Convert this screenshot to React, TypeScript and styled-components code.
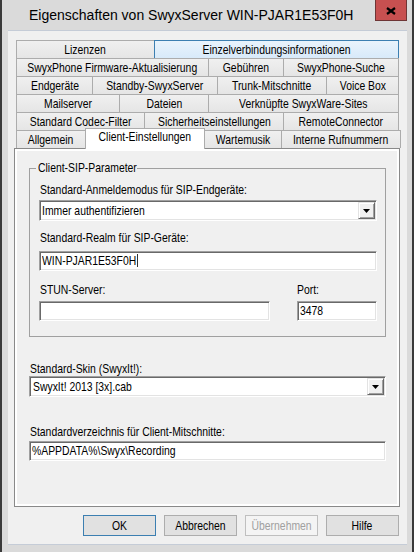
import React from "react";
import styled, { createGlobalStyle, css } from "styled-components";

const UI_FONT = `"Liberation Sans", Arial, sans-serif`;

const GlobalStyle = createGlobalStyle`
  *, *::before, *::after { box-sizing: border-box; }
  html, body { margin: 0; padding: 0; }
  body {
    background: #dadada;
    font-family: ${UI_FONT};
    font-size: 13px;
    color: #000;
  }
`;

const Txt = styled.span<{ $origin?: "left" | "center" }>`
  display: inline-block;
  white-space: nowrap;
  transform: scaleX(0.8);
  transform-origin: ${(p) => (p.$origin === "center" ? "center" : "left")} center;
`;

/* ---------- window frame ---------- */

const Window = styled.div`
  width: 414px;
  height: 552px;
  display: flex;
  flex-direction: column;
  background: #dadada;
  border-left: 2px solid #3a3a3a;
  border-right: 2px solid #3a3a3a;
  overflow: hidden;
`;

const TitleBar = styled.div`
  height: 30px;
  flex: none;
  display: flex;
  align-items: flex-start;
`;

const Title = styled.div`
  flex: 1;
  padding-left: 27px;
  font-size: 14px;
  line-height: 30px;
  white-space: nowrap;
`;

const CloseButton = styled.div`
  width: 32px;
  height: 21px;
  margin-right: 5px;
  background: #c75050;
  border: 1px solid #6e3535;
  border-top: none;
  display: flex;
  align-items: center;
  justify-content: center;
  padding-top: 2px;
`;

const Client = styled.div`
  flex: 1;
  margin: 0 5px 7px 6px;
  background: #f0f0f0;
  border-top: 1px solid #c5ccd7;
  border-bottom: 1px solid #c5ccd7;
  padding: 9px 0 0 6px;
  display: flex;
  flex-direction: column;
`;

/* ---------- tab control ---------- */

const TabStrip = styled.div`
  padding-left: 2px;
  display: flex;
  flex-direction: column;
`;

const TabRow = styled.div`
  display: flex;
  align-items: flex-end;
  height: 18px;
`;

type TabState = "hover" | "selected";

const Tab = styled.div<{ $w: number; $state?: TabState }>`
  flex: none;
  width: ${(p) => p.$w}px;
  height: 18px;
  border: 1px solid #acacac;
  border-bottom: none;
  background: linear-gradient(#f0f0f0, #e5e5e5);
  display: flex;
  justify-content: center;
  line-height: 17px;
  overflow: hidden;

  & + & {
    margin-left: -1px;
  }

  ${(p) =>
    p.$state === "hover" &&
    css`
      position: relative;
      z-index: 1;
      border-color: #3c7fb1;
      background: linear-gradient(#e9f3fc, #d8eaf9);
    `}

  ${(p) =>
    p.$state === "selected" &&
    css`
      position: relative;
      z-index: 2;
      height: 21px;
      margin-bottom: -1px;
      background: #fff;
      line-height: 16px;
      && {
        margin-left: -3px;
      }
    `}
`;

const Panel = styled.div`
  width: 386px;
  height: 359px;
  border: 1px solid #898989;
  background: #fff;
  padding: 2px;
  display: flex;
`;

const Page = styled.div`
  flex: 1;
  background: #f0f0f0;
  padding: 10px 11px 0 12px;
`;

/* ---------- form parts ---------- */

const Group = styled.fieldset`
  margin: 0;
  padding: 0 8px 15px 9px;
  border: 1px solid #a0a0a0;
  min-width: 0;
`;

const Legend = styled.legend`
  margin-left: -3px;
  padding: 0 2px;
  line-height: 14px;
  width: 101px;
  white-space: nowrap;
`;

const Caption = styled.div<{ $mt: number; $ml?: number }>`
  height: 14px;
  line-height: 14px;
  margin-top: ${(p) => p.$mt}px;
  padding-left: ${(p) => p.$ml ?? 0}px;
  white-space: nowrap;
`;

const sunken = css`
  border-style: solid;
  border-width: 1px;
  border-color: #a0a0a0 #ffffff #ffffff #a0a0a0;
  box-shadow: inset 1px 1px 0 #696969, inset -1px -1px 0 #e3e3e3;
  background: #fff;
`;

const Edit = styled.div<{ $mt?: number }>`
  ${sunken}
  height: 20px;
  margin-top: ${(p) => p.$mt ?? 0}px;
  padding-left: 2px;
  line-height: 18px;
  white-space: nowrap;
  overflow: hidden;
`;

const Caret = styled.span`
  display: inline-block;
  width: 1px;
  height: 13px;
  margin-left: 1px;
  background: #000;
  vertical-align: -2px;
`;

const Combo = styled.div<{ $mt?: number; $pad?: number }>`
  ${sunken}
  height: 21px;
  margin-top: ${(p) => p.$mt ?? 0}px;
  padding: 1px;
  display: flex;
  align-items: stretch;
`;

const ComboText = styled.div<{ $pad?: number }>`
  flex: 1;
  padding-left: ${(p) => p.$pad ?? 1}px;
  line-height: 17px;
  white-space: nowrap;
  overflow: hidden;
`;

const DropButton = styled.div`
  width: 17px;
  background: #f0f0f0;
  border-style: solid;
  border-width: 1px;
  border-color: #e3e3e3 #696969 #696969 #e3e3e3;
  box-shadow: inset 1px 1px 0 #fff, inset -1px -1px 0 #a0a0a0;
  display: flex;
  align-items: center;
  justify-content: center;
`;

const PairGrid = styled.div`
  display: grid;
  grid-template-columns: 1fr 80px;
  column-gap: 27px;
  row-gap: 4px;
  margin-top: 12px;
`;

const PairCaption = styled.div<{ $ml?: number }>`
  height: 14px;
  line-height: 14px;
  padding-left: ${(p) => p.$ml ?? 0}px;
  white-space: nowrap;
`;

/* ---------- dialog buttons ---------- */

const ButtonRow = styled.div`
  display: flex;
  justify-content: flex-end;
  gap: 8px;
  margin-top: 8px;
  padding-right: 8px;
`;

type ButtonKind = "default" | "normal" | "disabled";

const DialogButton = styled.div<{ $kind: ButtonKind }>`
  width: 73px;
  height: 21px;
  border: 1px solid #adadad;
  background: #e1e1e1;
  display: flex;
  justify-content: center;
  line-height: 19px;

  ${(p) =>
    p.$kind === "default" &&
    css`
      border-color: #3c7fb1;
    `}

  ${(p) =>
    p.$kind === "disabled" &&
    css`
      border-color: #bfbfbf;
      background: #f4f4f4;
      color: #a0a0a0;
    `}
`;

/* ---------- data ---------- */

type TabDef = { label: string; w: number; state?: TabState };

const TAB_ROWS: TabDef[][] = [
  [
    { label: "Lizenzen", w: 139 },
    { label: "Einzelverbindungsinformationen", w: 245, state: "hover" },
  ],
  [
    { label: "SwyxPhone Firmware-Aktualisierung", w: 193 },
    { label: "Gebühren", w: 76 },
    { label: "SwyxPhone-Suche", w: 116 },
  ],
  [
    { label: "Endgeräte", w: 77 },
    { label: "Standby-SwyxServer", w: 126 },
    { label: "Trunk-Mitschnitte", w: 110 },
    { label: "Voice Box", w: 73 },
  ],
  [
    { label: "Mailserver", w: 104 },
    { label: "Dateien", w: 90 },
    { label: "Verknüpfte SwyxWare-Sites", w: 191 },
  ],
  [
    { label: "Standard Codec-Filter", w: 129 },
    { label: "Sicherheitseinstellungen", w: 140 },
    { label: "RemoteConnector", w: 116 },
  ],
  [
    { label: "Allgemein", w: 70 },
    { label: "Client-Einstellungen", w: 120, state: "selected" },
    { label: "Wartemusik", w: 78 },
    { label: "Interne Rufnummern", w: 120 },
  ],
];

const BUTTONS: { label: string; kind: ButtonKind }[] = [
  { label: "OK", kind: "default" },
  { label: "Abbrechen", kind: "normal" },
  { label: "Übernehmen", kind: "disabled" },
  { label: "Hilfe", kind: "normal" },
];

/* ---------- glyphs ---------- */

const CloseGlyph = () => (
  <svg width="10" height="8" viewBox="0 0 10 8">
    <path d="M1 1 L9 7 M9 1 L1 7" stroke="#000" strokeWidth="2.2" fill="none" />
  </svg>
);

const DropArrow = () => (
  <svg width="7" height="4" viewBox="0 0 7 4">
    <path d="M0 0 H7 L3.5 4 Z" fill="#000" />
  </svg>
);

/* ---------- app ---------- */

export default function App() {
  return (
    <>
      <GlobalStyle />
      <Window>
        <TitleBar>
          <Title>Eigenschaften von SwyxServer WIN-PJAR1E53F0H</Title>
          <CloseButton>
            <CloseGlyph />
          </CloseButton>
        </TitleBar>

        <Client>
          <TabStrip>
            {TAB_ROWS.map((row, i) => (
              <TabRow key={i}>
                {row.map((t) => (
                  <Tab key={t.label} $w={t.w} $state={t.state}>
                    <Txt $origin="center">{t.label}</Txt>
                  </Tab>
                ))}
              </TabRow>
            ))}
          </TabStrip>

          <Panel>
            <Page>
              <Group>
                <Legend>
                  <Txt>Client-SIP-Parameter</Txt>
                </Legend>
                <Caption $mt={8} $ml={1}>
                  <Txt>Standard-Anmeldemodus für SIP-Endgeräte:</Txt>
                </Caption>
                <Combo $mt={3}>
                  <ComboText>
                    <Txt>Immer authentifizieren</Txt>
                  </ComboText>
                  <DropButton>
                    <DropArrow />
                  </DropButton>
                </Combo>
                <Caption $mt={10} $ml={1}>
                  <Txt>Standard-Realm für SIP-Geräte:</Txt>
                </Caption>
                <Edit $mt={6}>
                  <Txt>
                    WIN-PJAR1E53F0H
                    <Caret />
                  </Txt>
                </Edit>
                <PairGrid>
                  <PairCaption $ml={1}>
                    <Txt>STUN-Server:</Txt>
                  </PairCaption>
                  <PairCaption>
                    <Txt>Port:</Txt>
                  </PairCaption>
                  <Edit />
                  <Edit>
                    <Txt>3478</Txt>
                  </Edit>
                </PairGrid>
              </Group>

              <Caption $mt={25} $ml={1}>
                <Txt>Standard-Skin (SwyxIt!):</Txt>
              </Caption>
              <Combo>
                <ComboText $pad={2}>
                  <Txt>SwyxIt! 2013 [3x].cab</Txt>
                </ComboText>
                <DropButton>
                  <DropArrow />
                </DropButton>
              </Combo>

              <Caption $mt={28} $ml={1}>
                <Txt>Standardverzeichnis für Client-Mitschnitte:</Txt>
              </Caption>
              <Edit $mt={2}>
                <Txt>%APPDATA%\Swyx\Recording</Txt>
              </Edit>
            </Page>
          </Panel>

          <ButtonRow>
            {BUTTONS.map((b) => (
              <DialogButton key={b.label} $kind={b.kind}>
                <Txt $origin="center">{b.label}</Txt>
              </DialogButton>
            ))}
          </ButtonRow>
        </Client>
      </Window>
    </>
  );
}
